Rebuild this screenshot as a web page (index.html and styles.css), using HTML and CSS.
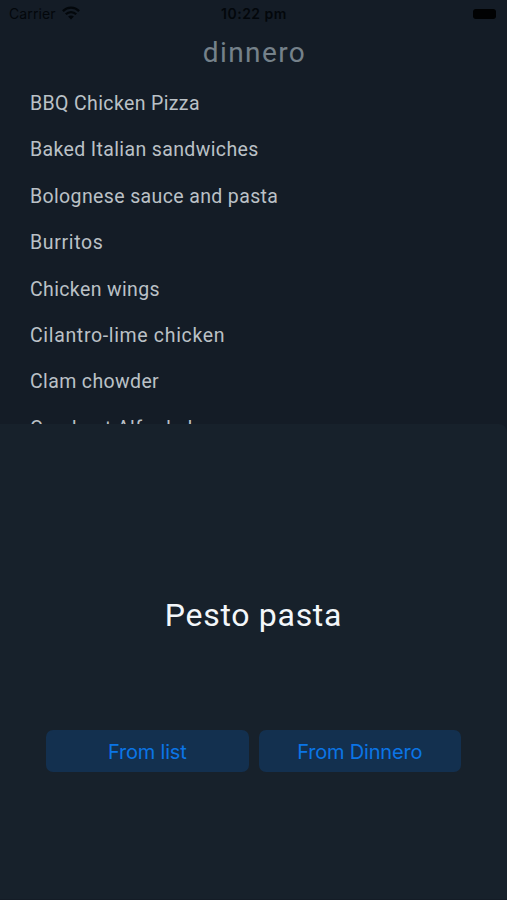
FILE: index.html
```html
<!DOCTYPE html>
<html lang="en">
<head>
<meta charset="utf-8">
<title>dinnero</title>
<link rel="stylesheet" href="styles.css">
</head>
<body>
<main class="screen">
  <header class="status">
    <div class="carrier"><span>Carrier</span>
      <svg class="wifi" viewBox="0 0 18 14" width="18" height="14"><g fill="none" stroke="#03070b" stroke-width="2.3"><path d="M.9 5.1C5.4.5 12.6.5 17.1 5.1"/><path d="M3.8 8.3c2.9-2.9 7.5-2.9 10.4 0"/></g><path d="M6.1 10.5c1.6-1.5 4.2-1.5 5.8 0L9 13.4z" fill="#03070b"/></svg>
    </div>
    <span class="time">10:22 pm</span>
    <span class="battery"></span>
  </header>
  <h1 class="title">dinnero</h1>
  <ul class="meals">
    <li>BBQ Chicken Pizza</li>
    <li>Baked Italian sandwiches</li>
    <li>Bolognese sauce and pasta</li>
    <li class="loose">Burritos</li>
    <li>Chicken wings</li>
    <li class="loose">Cilantro-lime chicken</li>
    <li>Clam chowder</li>
    <li>Crockpot Alfredo b</li>
  </ul>
  <section class="sheet">
    <h2 class="pick">Pesto pasta</h2>
    <div class="actions">
      <button class="action">From list</button>
      <button class="action">From Dinnero</button>
    </div>
  </section>
</main>
</body>
</html>
```
FILE: styles.css
```css
* { box-sizing: border-box; }
body { margin: 0; background: #141c26; font-family: Roboto, Inter, "Liberation Sans", sans-serif; }
.screen { width: 507px; height: 900px; display: flex; flex-direction: column; overflow: hidden; background: #141c26; }
.status { height: 28px; flex: none; display: grid; grid-template-columns: 1fr auto 1fr; align-items: center; padding: 0 11px 0 9px; color: #03070b; font-family: Inter, sans-serif; font-size: 14px; line-height: 28px; }
.carrier { display: flex; align-items: center; gap: 6px; letter-spacing: .1px; }
.wifi { display: block; margin-top: -2px; }
.time { font-weight: 600; letter-spacing: .5px; padding-left: 3px; }
.battery { justify-self: end; width: 23px; height: 10px; border-radius: 3px; background: #010203; }
.title { flex: none; height: 52px; margin: 0; padding-left: 2px; text-align: center; font-weight: 400; font-size: 28px; line-height: 50px; letter-spacing: 1.4px; color: #75818a; }
.meals { flex: none; height: 344px; margin: 0; padding: 0 0 0 30px; list-style: none; overflow: hidden; color: #bbc1c6; font-size: 19.5px; letter-spacing: .37px; }
.meals li { height: 46.4px; line-height: 47px; white-space: nowrap; }
.meals .loose { letter-spacing: .66px; }
.sheet { flex: none; height: 475px; background: #17212b; border-radius: 0 8px 0 0; }
.pick { margin: 167px 0 0; height: 48px; line-height: 48px; text-align: center; font-weight: 400; font-size: 32px; letter-spacing: .7px; color: #f3f7fa; }
.actions { display: grid; grid-template-columns: 1fr 1fr; gap: 10px; margin: 91px 46px 0; }
.action { height: 42px; border: 0; padding: 1px 0 0; border-radius: 7px; background: #13304f; color: #0b75e6; font: 400 20px Inter, "Liberation Sans", sans-serif; letter-spacing: -.2px; }
```
